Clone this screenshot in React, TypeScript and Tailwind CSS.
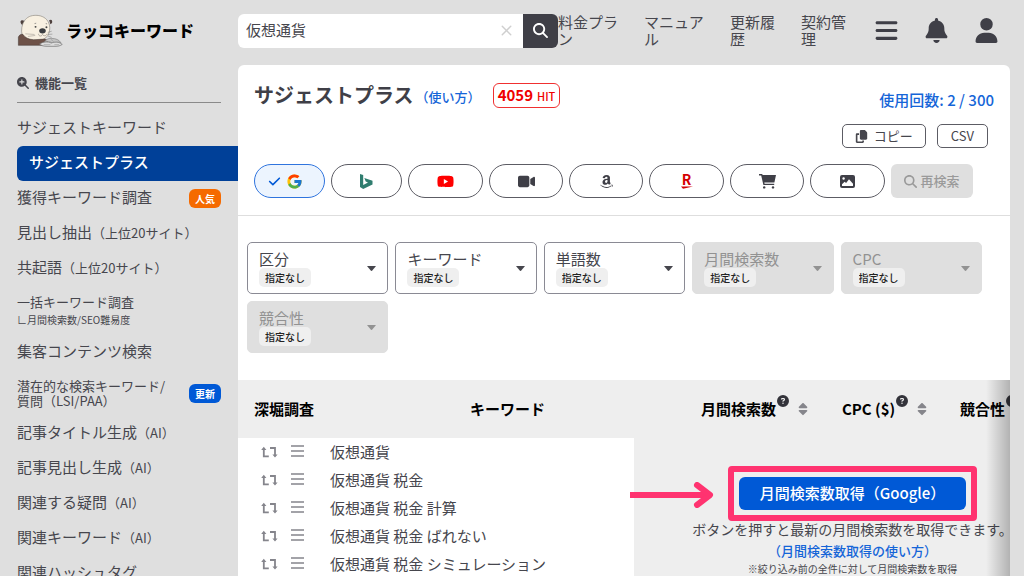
import type { ReactNode } from 'react';
import {
  FaAmazon,
  FaBars,
  FaBell,
  FaCheck,
  FaCircleQuestion,
  FaCopy,
  FaMagnifyingGlass,
  FaMagnifyingGlassPlus,
  FaSort,
  FaUser,
  FaVideo,
  FaYoutube,
} from 'react-icons/fa6';
import { FcGoogle } from 'react-icons/fc';
import { X } from 'lucide-react';

interface MenuItem {
  label: string;
  suffix?: string;
  sub?: string;
  badge?: 'popular' | 'updated';
  active?: boolean;
  compact?: boolean;
}

const MENU_ITEMS: MenuItem[] = [
  { label: 'サジェストキーワード' },
  { label: 'サジェストプラス', active: true },
  { label: '獲得キーワード調査', badge: 'popular' },
  { label: '見出し抽出', suffix: '（上位20サイト）' },
  { label: '共起語', suffix: '（上位20サイト）' },
  { label: '一括キーワード調査', sub: '∟月間検索数/SEO難易度' },
  { label: '集客コンテンツ検索' },
  { label: '潜在的な検索キーワード/ 質問（LSI/PAA）', compact: true, badge: 'updated' },
  { label: '記事タイトル生成', suffix: '（AI）' },
  { label: '記事見出し生成', suffix: '（AI）' },
  { label: '関連する疑問', suffix: '（AI）' },
  { label: '関連キーワード', suffix: '（AI）' },
  { label: '関連ハッシュタグ' },
];

const FILTERS = [
  { id: 'kubun', label: '区分', disabled: false },
  { id: 'keyword', label: 'キーワード', disabled: false },
  { id: 'words', label: '単語数', disabled: false },
  { id: 'volume', label: '月間検索数', disabled: true },
  { id: 'cpc', label: 'CPC', disabled: true },
  { id: 'competition', label: '競合性', disabled: true },
];

const KEYWORDS = [
  '仮想通貨',
  '仮想通貨 税金',
  '仮想通貨 税金 計算',
  '仮想通貨 税金 ばれない',
  '仮想通貨 税金 シミュレーション',
];

function OtterLogo() {
  return (
    <svg viewBox="48 36 140 100" className="w-[47px] h-[33px] flex-shrink-0" aria-hidden="true">
      <path d="M61 68c-5-6-5-13 2-13l8 2-6 14ZM144 55c7-4 11 0 9 8l-5 4Z" fill="#4e403d" />
      <path
        d="M62 98c-3-12-1-30 7-41 8-12 20-17 35-17 19 0 33 9 39 23 4 9 4 20 1 29-4 14-14 22-30 24-22 2-44-3-52-18Z"
        fill="#f8f0e1"
        stroke="#8b867e"
        strokeWidth="2"
      />
      <path
        d="M51 131V106c2-6 8-10 14-8 6 10 18 15 32 16l34-2 10 4-8 15Z"
        fill="#6d5147"
        stroke="#3d302c"
        strokeWidth="1.5"
      />
      <path d="M72 96l28 2M80 104l22-3" stroke="#aaa49a" strokeWidth="2" />
      <path
        d="M112 96c0 8 9 9 12 2 4 6 12 5 14-2"
        fill="none"
        stroke="#8d877e"
        strokeWidth="2"
      />
      <circle cx="103" cy="75" r="3" fill="#444" />
      <circle cx="136" cy="76" r="3" fill="#444" />
      <path d="M100 65l5-1M134 65l4 1" stroke="#666" strokeWidth="2" />
      <ellipse cx="124" cy="87" rx="10" ry="8" fill="#3b3d40" />
      <path d="M140 92l12-4M141 98l13-1M141 103l11 4" stroke="#777" strokeWidth="1.5" />
      <path
        d="M115 127c12-8 24-8 36-3 10-5 20-5 33 4-6 5-14 6-22 6h-24c-10 0-18-2-23-7Z"
        fill="#dcdcdc"
        stroke="#6b6b6b"
        strokeWidth="2"
      />
      <path
        d="M130 121c6-10 16-12 22-11 12 0 22 4 28 13-10-3-18-3-27 0-8-4-14-5-23-2Z"
        fill="#c4c4c4"
        stroke="#808080"
        strokeWidth="2"
      />
      <path d="M128 129h20M160 129h14M150 113l8 7" stroke="#999" strokeWidth="2" />
    </svg>
  );
}

function BingIcon() {
  return (
    <svg viewBox="0 0 13 15" className="w-[13px] h-[15px]">
      <path d="M0 0l3.2 1.1v10L8 8.5 5.7 7.4 4.3 3.9l8.2 2.9v3.6L3.2 15 0 13.1Z" fill="#2f7d6f" />
    </svg>
  );
}

function RakutenIcon() {
  return (
    <span className="flex flex-col items-center text-sm leading-[13px] font-bold text-[#d40000]">
      R
      <svg viewBox="0 0 12 3" className="w-3 h-[3px]">
        <path d="M0 .4h12L2 2.8Z" fill="#d40000" />
      </svg>
    </span>
  );
}

function CartIcon() {
  return (
    <svg viewBox="0 0 17 15" className="w-[17px] h-[15px]" fill="currentColor">
      <path d="M0 0h3.2l.4 1H17l-1.6 7.4H5.3l.3 1.4h9.6v1.3H4.4L2.2 1.4H0Z" />
      <circle cx="5.2" cy="13.4" r="1.2" />
      <circle cx="14" cy="13.4" r="1.2" />
    </svg>
  );
}

function ImageIcon() {
  return (
    <svg viewBox="0 0 15 13" className="w-[15px] h-[13px]">
      <rect width="15" height="13" rx="2" fill="currentColor" />
      <circle cx="3.6" cy="3.5" r="1.2" fill="#fff" />
      <path d="M2 11V9.2l2.6-2.4 1.5 1.3L9 4.3l4 4.5V11Z" fill="#fff" />
    </svg>
  );
}

function SwapIcon() {
  return (
    <svg viewBox="0 0 17 12" className="w-[17px] h-3" fill="none" stroke="currentColor" strokeWidth="1.8">
      <path d="M2.8 2.5V10.4h5M9 2h5v7.5" />
      <path d="M.2 3.9L2.8 .8l2.6 3.1ZM11.4 8.4l2.6 3.1 2.6-3.1Z" fill="currentColor" stroke="none" />
    </svg>
  );
}

function ListIcon() {
  return (
    <svg viewBox="0 0 13 12" className="w-[13px] h-3 mb-0.5" stroke="currentColor" strokeWidth="1.4">
      <path d="M0 1h13M0 6h13M0 11h13" />
    </svg>
  );
}

const SOURCES: { name: string; icon: ReactNode; width: string }[] = [
  { name: 'Bing', icon: <BingIcon />, width: 'w-[71px]' },
  { name: 'YouTube', icon: <FaYoutube size={17} className="text-[#ff0000]" />, width: 'w-[75px]' },
  { name: '動画', icon: <FaVideo size={17} />, width: 'w-[74px]' },
  { name: 'Amazon', icon: <FaAmazon size={15} />, width: 'w-[74px]' },
  { name: '楽天', icon: <RakutenIcon />, width: 'w-[75px]' },
  { name: 'ショッピング', icon: <CartIcon />, width: 'w-[74px]' },
  { name: '画像', icon: <ImageIcon />, width: 'w-[75px]' },
];

function Sidebar() {
  return (
    <aside className="w-[238px] flex-shrink-0 pl-[17px]">
      <a href="#" className="flex items-center gap-0.5 h-[60px] text-base font-black text-black">
        <OtterLogo />
        ラッコキーワード
      </a>
      <h2
        className="flex items-center gap-[6px] h-[43px] mr-[17px] pt-1 text-[13px] font-bold
                   border-b border-[#8a8a8a]"
      >
        <FaMagnifyingGlassPlus size={12} />
        機能一覧
      </h2>
      <nav className="pt-2">
        {MENU_ITEMS.map((item) => (
          <a
            key={item.label}
            href="#"
            className={`flex items-center justify-between ${
              item.active
                ? 'h-[35px] pl-3 rounded-l-md bg-[#004098] text-white font-medium'
                : item.sub
                  ? 'h-[49px] pr-[17px]'
                  : item.compact
                    ? 'h-[46px] pr-[17px]'
                    : 'h-[35px] pr-[17px]'
            }`}
          >
            {item.sub ? (
              <span className="text-[13px] leading-[18px]">
                {item.label}
                <span className="block text-[10px]">{item.sub}</span>
              </span>
            ) : item.compact ? (
              <span className="w-[156px] text-[13px] leading-[15px]">{item.label}</span>
            ) : (
              <span className="pb-0.5 text-[15px] whitespace-nowrap">
                {item.label}
                {item.suffix && <span className="text-[13px]">{item.suffix}</span>}
              </span>
            )}
            {item.badge && (
              <span
                className={`w-8 flex-shrink-0 rounded-md text-center text-[10px] leading-[19px] font-bold text-white ${
                  item.badge === 'popular' ? 'bg-[#f56a00]' : 'bg-[#0059d6]'
                }`}
              >
                {item.badge === 'popular' ? '人気' : '更新'}
              </span>
            )}
          </a>
        ))}
      </nav>
    </aside>
  );
}

function Header() {
  return (
    <header className="flex items-center h-[65px] pr-[25px] pb-1">
      <form className="flex flex-1 h-[34px]" onSubmit={(e) => e.preventDefault()}>
        <div className="flex flex-1 items-center px-2 rounded-l-md bg-white">
          <input
            type="text"
            aria-label="キーワード"
            defaultValue="仮想通貨"
            className="flex-1 min-w-0 text-[15px] outline-none"
          />
          <button type="button" aria-label="クリア" className="text-[#cfcfcf]">
            <X size={17} strokeWidth={2} />
          </button>
        </div>
        <button
          type="submit"
          aria-label="検索"
          className="flex items-center justify-center w-[35px] rounded-r-md bg-[#3f3f47] text-white"
        >
          <FaMagnifyingGlass size={15} />
        </button>
      </form>
      <nav className="flex gap-[26px] pb-0.5 text-[15px] leading-[17px]">
        <a href="#" className="w-[60px]">料金プラン</a>
        <a href="#" className="w-[60px]">マニュアル</a>
        <a href="#" className="w-[45px]">更新履歴</a>
        <a href="#" className="w-[45px]">契約管理</a>
      </nav>
      <div className="flex gap-[25px] pl-7 text-[#3f3f47]">
        <button aria-label="メニュー"><FaBars size={25} /></button>
        <button aria-label="通知"><FaBell size={25} /></button>
        <button aria-label="アカウント"><FaUser size={25} /></button>
      </div>
    </header>
  );
}

function SourcePicker() {
  return (
    <div className="flex gap-[6px] h-[52px] px-4 border-b border-[#dedede]">
      <button
        aria-label="Google"
        className="flex items-center justify-center gap-[5px] w-[71px] h-[34px] pr-4 pl-2 rounded-full
                   border border-[#2f74de] bg-[#ecf4fe] text-[#0059d6]"
      >
        <FaCheck size={13} />
        <FcGoogle size={17} />
      </button>
      {SOURCES.map((source) => (
        <button
          key={source.name}
          aria-label={source.name}
          className={`flex items-center justify-center h-[34px] rounded-full border
                      border-[#5c5c64] text-[#3f3f47] ${source.width}`}
        >
          {source.icon}
        </button>
      ))}
      <button
        disabled
        className="flex items-center justify-center gap-[3px] w-[82px] h-[34px] rounded-md
                   bg-[#dfdfdf] text-[13px] font-medium text-[#9a9a9a]"
      >
        <FaMagnifyingGlass size={13} />
        再検索
      </button>
    </div>
  );
}

function Filters() {
  return (
    <div className="grid grid-cols-5 gap-[7px] pt-[26px] pl-[9px] pr-7 pb-[27px]">
      {FILTERS.map((filter) => (
        <label
          key={filter.id}
          htmlFor={filter.id}
          className={`flex items-center justify-between h-[52px] px-[11px] rounded-[5px] border ${
            filter.disabled
              ? 'border-[#dfdfdf] bg-[#dfdfdf] text-[#929292]'
              : 'border-[#8a8a94] bg-white'
          }`}
        >
          <span>
            <span className="block text-[15px] leading-[18px]">{filter.label}</span>
            <select
              id={filter.id}
              disabled={filter.disabled}
              className="block w-[52px] h-[19px] px-[6px] rounded-[5px] appearance-none bg-[#efefef]
                         text-[10px] font-medium text-[#222] opacity-100"
            >
              <option>指定なし</option>
            </select>
          </span>
          <svg viewBox="0 0 9 5" className="w-[9px] h-[5px]" fill="currentColor">
            <path d="M0 0h9L5.5 4.3a1.3 1.3 0 0 1-2 0Z" />
          </svg>
        </label>
      ))}
    </div>
  );
}

function SortHeader({ label }: { label: string }) {
  return (
    <span className="flex items-center whitespace-nowrap">
      {label}
      <FaCircleQuestion size={12} className="ml-px mb-4 text-[#33333a]" />
      <FaSort size={14} className="ml-[7px] text-[#85858b]" />
    </span>
  );
}

function ResultTable() {
  return (
    <div className="relative overflow-hidden">
      <table className="table-fixed w-full min-w-[833px] bg-[#eee]">
        <thead>
          <tr className="h-[58px] text-[15px] text-left text-black">
            <th className="w-[92px] text-center whitespace-nowrap">深堀調査</th>
            <th className="w-[304px] pl-[51px] text-center">キーワード</th>
            <th className="w-[189px] pl-[67px]"><SortHeader label="月間検索数" /></th>
            <th className="w-[118px] pl-[19px]"><SortHeader label="CPC ($)" /></th>
            <th className="pl-[19px]"><SortHeader label="競合性" /></th>
          </tr>
        </thead>
        <tbody>
          {KEYWORDS.map((keyword, index) => (
            <tr key={keyword} className="h-7">
              <td className="bg-white">
                <div className="flex items-center gap-[13px] pl-[23px] text-[#85858c]">
                  <button aria-label={`${keyword}で再検索`}><SwapIcon /></button>
                  <button aria-label={`${keyword}のメニュー`}><ListIcon /></button>
                </div>
              </td>
              <td className="bg-white text-[15px]">{keyword}</td>
              {index === 0 && (
                <td rowSpan={KEYWORDS.length} colSpan={3} className="relative pt-7 align-top text-center">
                  <svg
                    viewBox="0 0 84 26"
                    className="absolute -left-1 top-11 w-[84px] h-[26px]"
                    fill="none"
                    stroke="#ff3370"
                    strokeWidth="6"
                  >
                    <path d="M0 13h78" />
                    <path d="M67 3l13 10-13 10" strokeLinecap="round" strokeLinejoin="round" />
                  </svg>
                  <div className="inline-block p-[5px] border-6 border-[#ff3370] rounded-sm align-top">
                    <button
                      className="block h-[33px] px-[21px] rounded-md bg-[#0059d6] text-[15px] font-medium
                                 text-white whitespace-nowrap"
                    >
                      月間検索数取得（Google）
                    </button>
                  </div>
                  <p className="text-sm leading-[17px]">ボタンを押すと最新の月間検索数を取得できます。</p>
                  <a href="#" className="block text-[13px] leading-[25px] font-medium text-[#1565d8]">
                    （月間検索数取得の使い方）
                  </a>
                  <p className="text-[10px] leading-[12px]">※絞り込み前の全件に対して月間検索数を取得</p>
                </td>
              )}
            </tr>
          ))}
        </tbody>
      </table>
      <div className="absolute inset-y-0 right-0 w-6 bg-linear-to-r from-transparent to-black/25" />
    </div>
  );
}

export default function App() {
  return (
    <div
      className="flex h-screen overflow-hidden bg-[#dfdfdf] text-[#46464d]
                 font-['Noto_Sans_CJK_JP','Noto_Sans',sans-serif]"
    >
      <Sidebar />
      <div className="flex-1 min-w-0">
        <Header />
        <main className="mr-[14px] rounded-t-md bg-white">
          <div className="flex justify-between h-[99px] px-4">
            <div className="flex items-center h-[60px]">
              <h1 className="text-xl font-bold text-[#3f3f47]">サジェストプラス</h1>
              <a href="#" className="ml-0.5 pt-1 text-[13px] font-medium text-[#1565d8]">（使い方）</a>
              <span
                className="flex items-baseline gap-1 ml-3 px-1 border border-[#f03030] rounded-md
                           text-[15px] leading-[22px] font-bold text-[#f00000]"
              >
                4059
                <span className="text-[11px] font-medium">HIT</span>
              </span>
            </div>
            <div className="flex flex-col items-end pt-[25px]">
              <a href="#" className="text-[15px] leading-5 font-medium text-[#1565d8]">使用回数: 2 / 300</a>
              <div className="flex gap-[11px] mt-[14px] mr-[6px] text-[13px]">
                <button className="flex items-center gap-[6px] h-6 px-3 border border-[#5c5c64] rounded-[5px]">
                  <FaCopy size={13} />
                  コピー
                </button>
                <button className="h-6 px-[13px] border border-[#5c5c64] rounded-[5px]">CSV</button>
              </div>
            </div>
          </div>
          <SourcePicker />
          <Filters />
          <ResultTable />
        </main>
      </div>
    </div>
  );
}
